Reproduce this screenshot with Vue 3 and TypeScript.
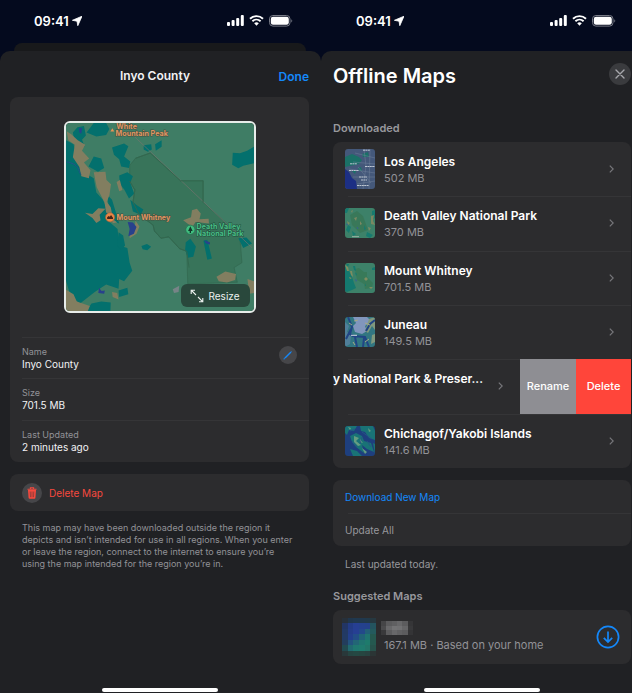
<script setup lang="ts">
type Thumb = 'city' | 'valley' | 'terrain' | 'fjord' | 'islands'

interface OfflineMap {
  name: string
  size?: string
  thumb?: Thumb
  swiped?: boolean
}

interface Detail {
  label: string
  value: string
  editable?: boolean
}

const details: Detail[] = [
  { label: 'Name', value: 'Inyo County', editable: true },
  { label: 'Size', value: '701.5 MB' },
  { label: 'Last Updated', value: '2 minutes ago' },
]

const maps: OfflineMap[] = [
  { name: 'Los Angeles', size: '502 MB', thumb: 'city' },
  { name: 'Death Valley National Park', size: '370 MB', thumb: 'valley' },
  { name: 'Mount Whitney', size: '701.5 MB', thumb: 'terrain' },
  { name: 'Juneau', size: '149.5 MB', thumb: 'fjord' },
  { name: 'y National Park & Preser...', swiped: true },
  { name: 'Chichagof/Yakobi Islands', size: '141.6 MB', thumb: 'islands' },
]

// Obscured preview of the suggested map, one colour per tile
const tiles: string[][] = [
  ['#27303a', '#20364c', '#20384e', '#20384e', '#21394a', '#263840'],
  ['#223564', '#233b85', '#263f92', '#24418e', '#24418c', '#24545f'],
  ['#223964', '#243c88', '#263f93', '#23498a', '#226078', '#245a5d'],
  ['#223a64', '#233f8c', '#234d87', '#216377', '#1f7470', '#25584f'],
  ['#233d5c', '#23537e', '#226675', '#20746f', '#1e7b6c', '#25584f'],
  ['#224a50', '#216a70', '#1f7870', '#1f7b6e', '#237568', '#27524b'],
  ['#29383a', '#264542', '#254843', '#264641', '#284240', '#2b3535'],
]

const nameTiles: string[][] = [
  ['#454547', '#5b5b5d', '#606062', '#68686a', '#5c5c5e', '#353537'],
  ['#4b4b4d', '#68686a', '#737375', '#717173', '#666668', '#38383a'],
  ['#39393b', '#5c5c5e', '#68686a', '#616163', '#5c5c5e', '#343436'],
]
</script>

<template>
  <main class="screens">
    <svg class="defs" aria-hidden="true">
      <symbol id="terrain" viewBox="27 27 576 576">
        <rect x="27" y="27" width="576" height="576" fill="#3f7d65" />
        <path fill="#38745a" d="M222 157L240 135 285 119 378 204H447V270L520 335 560 378 566 455 542 470 552 515 400 520 397 420 375 412 342 376 318 380 298 358 294 340 252 308 232 270 238 232 222 205Z" stroke="#33674f" stroke-width="2" />
        <path fill="#03706d" d="M27 80L50 92 58 125 75 140 85 180 112 196 120 240 140 262 152 290 160 330 185 352 190 402 215 410 222 455 230 480 205 512 190 505 188 535 150 522 115 545 70 580 42 560 27 510Z" />
        <path fill="#03706d" d="M48 56L62 40 82 36 88 65 76 78 84 98 72 110 52 78ZM112 27H150L160 45 150 64 120 68 90 56ZM168 102L205 90 218 98 205 130 224 145 220 165 196 160 190 138 174 124ZM112 130L135 136 144 165 125 176 96 160ZM190 188L215 178 232 190 224 210 236 244 220 258 205 230 192 215ZM224 262L243 278 264 292 256 308 232 298ZM265 95L288 92 290 108 278 115 265 108ZM300 92L320 80 320 100 302 112ZM538 118L560 120 582 112 603 100V150L570 158 555 166 536 155ZM155 248L168 262 182 308 190 335 170 328 157 290ZM188 362L202 372 208 402 196 415 184 402ZM258 404L275 398 288 406 276 417 262 414ZM394 392L408 382 425 405 417 437 400 440 392 415ZM448 388L460 385 474 442 460 446ZM555 380L580 378 597 396 570 410ZM105 580L135 574 164 577 163 603H90ZM188 540L215 532 218 552 190 560Z" />
        <path fill="#827e60" d="M29 52L44 62 63 80 86 94 76 112 98 136 82 148 102 172 97 196 74 190 68 162 48 132 54 94 34 80ZM112 178L148 176 151 202 165 215 160 248 152 268 164 285 168 304 150 302 145 270 121 224ZM85 302L108 306 126 288 148 290 130 308 133 325 120 333 108 318ZM182 208L192 202 200 232 190 236ZM166 318L184 332 170 334ZM240 326L252 344 243 366 222 380 222 372 237 350ZM386 325L410 316 413 294 428 290 440 304 436 322 464 320 465 335 424 330 415 344 400 336ZM488 498L515 482 548 490 545 508 520 516 495 512ZM27 538L50 552 60 574 100 588 94 603H27ZM168 545L184 548 188 568 170 560ZM583 505L603 512V548L588 550Z" />
        <path fill="#28418c" d="M216 330L232 332 243 346 235 366 218 374 222 352ZM67 42L76 42 74 60 68 56ZM128 532L136 542 146 540 144 550 126 548ZM450 386L468 392 468 399 456 396Z" />
        <path d="M29 146C45 149 58 155 63 164S68 180 73 185" fill="none" stroke="#27518a" stroke-width="3" />
        <path d="M354 536L374 526 372 545 358 548Z" fill="#778487" />
        <path d="M200 34L597 409" fill="none" stroke="#77736f" stroke-width="2" />
        <path d="M240 135L285 119 378 204H447V270M222 205L238 232 232 270 252 308 294 340 298 358 318 380 342 376 375 412 397 420 404 470" fill="none" stroke="#33674f" stroke-width="3" />
      </symbol>
      <symbol id="locate" viewBox="0 0 10 10"><path d="M10 .2L5.8 9.7 5 5.2.4 4.3Z" fill="#fff" stroke="#fff" stroke-width=".8" stroke-linejoin="round" /></symbol>
      <symbol id="signal" viewBox="0 0 17 11">
        <rect x="0" y="7" width="3" height="4" rx="1" fill="#fff" /><rect x="4.6" y="5" width="3" height="6" rx="1" fill="#fff" />
        <rect x="9.2" y="3" width="3" height="8" rx="1" fill="#fff" /><rect x="13.8" y="0" width="3" height="11" rx="1" fill="#fff" />
      </symbol>
      <symbol id="wifi" viewBox="0 0 15 11">
        <path d="M1 3.8C4.7.2 10.3.2 14 3.8M3.4 6.3C5.8 4 9.2 4 11.6 6.3" fill="none" stroke="#fff" stroke-width="1.9" />
        <path d="M5.2 8.2Q7.5 6.2 9.8 8.2L7.5 10.7Z" fill="#fff" />
      </symbol>
      <symbol id="battery" viewBox="0 0 24 12">
        <rect x=".5" y=".5" width="20.5" height="10.6" rx="3.4" fill="none" stroke="#777a85" />
        <rect x="1.8" y="1.8" width="18" height="8" rx="2.2" fill="#fff" />
        <path d="M22.3 4.2C23.6 4.7 23.6 6.9 22.3 7.4Z" fill="#777a85" />
      </symbol>
    </svg>

    <section class="phone detail" aria-labelledby="detail-title">
      <div class="status">
        <span class="time">09:41</span>
        <svg class="locate"><use href="#locate" /></svg>
        <svg class="signal"><use href="#signal" /></svg>
        <svg class="wifi"><use href="#wifi" /></svg>
        <svg class="battery"><use href="#battery" /></svg>
      </div>
      <div class="behind"></div>
      <div class="sheet">
        <header class="bar">
          <h1 id="detail-title">Inyo County</h1>
          <button type="button" class="done">Done</button>
        </header>
        <div class="card">
          <div class="preview">
            <div class="map">
              <svg class="fill" viewBox="27 27 576 576">
                <use href="#terrain" x="27" y="27" width="576" height="576" />
                <path d="M169 43L175 53H163Z" fill="#e99255" />
                <g class="place warm">
                  <text><tspan x="181" y="44">White</tspan><tspan x="179" y="67">Mountain Peak</tspan></text>
                  <text x="182" y="323">Mount Whitney</text>
                </g>
                <g class="place park">
                  <text><tspan x="427" y="351">Death Valley</tspan><tspan x="427" y="374">National Park</tspan></text>
                </g>
                <circle cx="162" cy="316" r="14" fill="#e98645" stroke="#9c603d" stroke-width="2" />
                <path d="M153 321V316L158 312 161 314 165 309 171 317V321Z" fill="#43261b" />
                <circle cx="408" cy="354" r="14" fill="#41bd7f" stroke="#23704e" stroke-width="2" />
                <path d="M408 343L415 358H410V364H406V358H401Z" fill="#12392a" />
              </svg>
              <button type="button" class="resize">
                <svg viewBox="0 0 14 14"><path d="M1.2 5V1.2H5M1.2 1.2L6 6M8 8L12.8 12.8M12.8 9V12.8H9" /></svg>
                Resize
              </button>
            </div>
          </div>
          <dl class="details">
            <div v-for="d in details" :key="d.label" class="entry">
              <div>
                <dt>{{ d.label }}</dt>
                <dd>{{ d.value }}</dd>
              </div>
              <button v-if="d.editable" type="button" class="edit" aria-label="Edit name">
                <svg viewBox="0 0 18 18"><path d="M6 12L12 6" stroke="#1488fa" stroke-width="1.5" /><path d="M4.8 13.2L6 12.6 5.4 12ZM12.2 5.2L12.8 5.8" stroke="#1488fa" stroke-width=".8" /></svg>
              </button>
            </div>
          </dl>
        </div>
        <button type="button" class="card remove">
          <span class="bin">
            <svg viewBox="0 0 10 12">
              <path d="M.5 2.3H9.5M3.4 2.2V.8H6.6V2.2" fill="none" stroke="#f6493e" stroke-width="1.1" />
              <path d="M1 3H9L8.4 11Q8.3 11.8 7.5 11.8H2.5Q1.7 11.8 1.6 11Z" fill="#f6493e" />
              <path d="M3.2 4.5L3.5 10.2M5 4.5V10.2M6.8 4.5L6.5 10.2" stroke="#6f3a38" stroke-width=".7" />
            </svg>
          </span>
          Delete Map
        </button>
        <p class="note">This map may have been downloaded outside the region it depicts and isn’t intended for use in all regions. When you enter or leave the region, connect to the internet to ensure you’re using the map intended for the region you’re in.</p>
        <div class="home"></div>
      </div>
    </section>

    <section class="phone library" aria-labelledby="library-title">
      <div class="status">
        <span class="time">09:41</span>
        <svg class="locate"><use href="#locate" /></svg>
        <svg class="signal"><use href="#signal" /></svg>
        <svg class="wifi"><use href="#wifi" /></svg>
        <svg class="battery"><use href="#battery" /></svg>
      </div>
      <div class="sheet">
        <header class="heading">
          <h1 id="library-title">Offline Maps</h1>
          <button type="button" class="close" aria-label="Close">
            <svg viewBox="0 0 10 10"><path d="M1 1L9 9M9 1L1 9" /></svg>
          </button>
        </header>
        <h2>Downloaded</h2>
        <ul class="card list">
          <li v-for="m in maps" :key="m.name" :class="{ swiped: m.swiped }">
            <a href="#" class="row">
              <svg v-if="m.thumb === 'city'" class="thumb tall" viewBox="0 0 30 40">
                <rect width="30" height="40" fill="#44587a" />
                <path d="M0 8L7 5 14 8 17 11 14 15 0 18ZM17 5L23 3 24 8 18 8ZM13 19L16 18 17 22 14 22ZM7 22L11 22 10 25Z" fill="#1b7067" />
                <path d="M0 20L4 23 7 29 11 32 12 40H0Z" fill="#1c2f84" />
                <path d="M8 13L30 15M4 20L30 24M8 28L30 28M12 35L30 32M19 0L21 17 18 40M25 0L24 40M10 4L30 9M13 18L26 34" stroke="#71819b" stroke-width=".5" fill="none" />
                <path d="M18 1.2H25M5 14.8H12M20 17.5H30M4 21.5H14M14 28H22M16 31H22M12 36.5H24" stroke="#bdc6d2" stroke-width="1" stroke-dasharray="2 .4" />
              </svg>
              <svg v-else-if="m.thumb === 'valley'" class="thumb" viewBox="0 0 30 30">
                <rect width="30" height="30" fill="#3d8169" />
                <path d="M5 7L12 3 18 8 23 22 15 25 7 17Z" fill="#397859" />
                <path d="M0 0H4L2 5H0ZM27 3L30 2V10L27 12ZM3 17L6 19 4 25 1 22ZM22 24L28 27 25 30 21 28ZM7 23L11 26 8 28ZM19 17L21 21 19 22Z" fill="#177a6f" />
                <path d="M26 8L29 7 28 13 30 17 26 16ZM9 10L12 9 11 13ZM15 13L17 16 15 17ZM6 3L8 2 7 5ZM2 13L5 15 3 17ZM23 19L26 20 24 23Z" fill="#7b8862" />
                <path d="M1 16L3 17M12 19L13 21" stroke="#365f96" />
                <path d="M7 28.7H14" stroke="#b6c4b7" stroke-width=".8" />
              </svg>
              <svg v-else-if="m.thumb === 'terrain'" class="thumb" viewBox="0 0 30 30">
                <rect width="30" height="30" fill="#3d8169" />
                <path d="M10 6L14 5 19 9H22V14L28 20 27 25 20 26 19 21 12 17Z" fill="#387a59" />
                <path d="M0 3L3 6 5 10 7 14 9 20 11 25 7 27 2 29 0 28ZM8 3L10 3 11 8 9 7ZM10 9L12 11 11 13ZM27 5L30 4V7H27ZM20 20L21 23 20 23ZM1 1L4 1 3 4Z" fill="#14796f" />
                <path d="M0 2L3 4 4 8 2 8ZM5 8L7 8 8 14 6 12ZM4 14L7 15 5 16ZM19 16L21 14 23 16 21 18ZM24 24L28 24 26 26Z" fill="#7f8d60" />
                <path d="M10 16L12 17 11 19Z" fill="#365f96" />
              </svg>
              <svg v-else-if="m.thumb === 'fjord'" class="thumb" viewBox="0 0 30 30">
                <rect width="30" height="30" fill="#327681" />
                <path d="M8 0H22L26 4 20 9 22 14 17 17 10 15 8 9 11 6Z" fill="#8196bd" />
                <path d="M24 2L30 0V13L27 9 23 16 20 14ZM27 18L30 17V25L26 27Z" fill="#80987d" />
                <path d="M0 5L4 9 2 15 6 18 5 27 0 30Z" fill="#507f9a" />
                <path d="M3 0L7 10 5 17 10 20 12 30M6 12L1 22M7 19L20 20 24 30M21 14L25 7 30 3M19 21L18 30" stroke="#214585" stroke-width="2" fill="none" />
                <path d="M4 6L7 8M9 4L13 3M20 6L25 8M20 25L24 22M8 25L10 28" stroke="#a6aa84" stroke-width="1" />
                <path d="M6 18.3H12" stroke="#d0d8df" />
              </svg>
              <svg v-else-if="m.thumb === 'islands'" class="thumb" viewBox="0 0 30 30">
                <rect width="30" height="30" fill="#1e3f7e" />
                <path d="M0 0H12L9 5 4 4 2 9 0 7ZM15 0H28L30 5V14L24 12 20 6 16 5ZM5 10L11 7 17 10 19 15 26 17 29 26 22 23 17 19 19 27 11 21 7 16ZM5 23L12 25 17 30H8ZM28 17L30 18V28Z" fill="#197376" />
                <path d="M9 10L14 12 11 15 16 19 13 20 9 16ZM15 13L18 17 15 16ZM17 22L22 26 20 28ZM23 2L26 5 24 6ZM3 1L6 2 5 4Z" fill="#659d82" />
                <path d="M7 15L12 21M17 11L15 18M22 15L26 21M5 5L10 3M17 6L27 13" stroke="#275586" stroke-width=".9" fill="none" />
              </svg>
              <span class="label">
                <span class="name">{{ m.name }}</span>
                <span class="size">{{ m.size }}</span>
              </span>
              <svg class="chevron" viewBox="0 0 5 8"><path d="M.8 .6L4.2 4 .8 7.4" /></svg>
            </a>
            <template v-if="m.swiped">
              <button type="button" class="action rename">Rename</button>
              <button type="button" class="action delete">Delete</button>
            </template>
          </li>
        </ul>
        <div class="card commands">
          <button type="button" class="download">Download New Map</button>
          <button type="button">Update All</button>
        </div>
        <p class="updated">Last updated today.</p>
        <h2>Suggested Maps</h2>
        <div class="card suggested">
          <svg class="mosaic" viewBox="0 0 6 7" preserveAspectRatio="none" shape-rendering="crispEdges">
            <template v-for="(line, y) in tiles" :key="y">
              <rect v-for="(c, x) in line" :key="x" :x="x" :y="y" width="1" height="1" :fill="c" />
            </template>
          </svg>
          <div class="about">
            <svg class="hidden-name" viewBox="0 0 6 3" preserveAspectRatio="none" shape-rendering="crispEdges">
              <template v-for="(line, y) in nameTiles" :key="y">
                <rect v-for="(c, x) in line" :key="x" :x="x" :y="y" width="1" height="1" :fill="c" />
              </template>
            </svg>
            <span class="size">167.1 MB · Based on your home</span>
          </div>
          <button type="button" class="get" aria-label="Download suggested map">
            <svg viewBox="0 0 24 24"><circle cx="12" cy="12" r="10.6" /><path d="M12 6.5V17M7.8 12.9L12 17.1 16.2 12.9" /></svg>
          </button>
        </div>
        <div class="home"></div>
      </div>
    </section>
  </main>
</template>

<style>
body {
  margin: 0;
  background: #040a1e;
}
</style>

<style scoped>
.screens {
  display: grid;
  grid-template-columns: 321fr 311fr;
  min-height: 100vh;
  background: #040a1e;
  color: #f2f2f4;
  font-family: Inter, "Liberation Sans", sans-serif;
  font-size: 10px;
}
.screens * { box-sizing: border-box; }
.defs {
  position: absolute;
  width: 0;
  height: 0;
}
h1, h2, p, dl, dd, ul {
  margin: 0;
  padding: 0;
}
button {
  padding: 0;
  border: 0;
  background: none;
  color: inherit;
  font: inherit;
}
svg { display: block; flex: none; }
.phone {
  display: flex;
  flex-direction: column;
  min-width: 0;
}
.status {
  display: flex;
  align-items: center;
  height: 43px;
  padding: 0 28px 2px 34px;
  color: #fff;
}
.library .status {
  height: 51px;
  padding: 0 16px 10px 35px;
}
.time {
  font-size: 13px;
  font-weight: 600;
  line-height: 18px;
}
.locate { width: 10px; height: 10px; margin: 0 auto 0 3px; }
.signal { width: 17px; height: 11px; }
.wifi { width: 15px; height: 11px; margin: 0 5px; }
.battery { width: 24px; height: 12px; }
.behind {
  height: 8px;
  margin: 0 15px 0 14px;
  border-radius: 8px 8px 0 0;
  background: #18191b;
}
.sheet {
  display: flex;
  flex: 1;
  flex-direction: column;
  border-radius: 10px 10px 0 0;
  background: #202124;
}
.detail .sheet { padding: 0 12px 0 10px; }
.library .sheet {
  padding: 0 1px 0 12px;
  border-radius: 10px 0 0 0;
}
.bar {
  display: grid;
  grid-template-columns: 1fr auto 1fr;
  align-items: center;
  height: 46px;
  padding-top: 4px;
}
.bar h1 {
  grid-column: 2;
  padding-right: 9px;
  font-size: 12px;
  font-weight: 600;
  line-height: 16px;
}
.done {
  justify-self: end;
  color: #1488fa;
  font-size: 12px;
  font-weight: 600;
}
.card {
  border-radius: 8px;
  background: #2c2c2e;
}
.preview {
  display: flex;
  justify-content: center;
  padding: 24px 0;
}
.map {
  position: relative;
  width: 192px;
  height: 192px;
  border: 2px solid #e8edea;
  border-radius: 6px;
  overflow: hidden;
}
.fill { width: 100%; height: 100%; }
.place {
  font-size: 22px;
  font-weight: 700;
  paint-order: stroke;
  stroke-width: 3px;
}
.warm { fill: #df9663; stroke: #46503f; }
.park { fill: #48bd86; stroke: #1f4d3b; }
.resize {
  position: absolute;
  right: 4px;
  bottom: 4px;
  display: flex;
  align-items: center;
  justify-content: center;
  gap: 4px;
  width: 69px;
  height: 23px;
  border-radius: 6px;
  background: #29483c;
  color: #edf1ef;
}
.resize svg { width: 14px; height: 14px; }
.resize path { fill: none; stroke: #edf1ef; stroke-width: 1.1; }
.details { padding-left: 12px; }
.entry {
  display: flex;
  align-items: flex-start;
  justify-content: space-between;
  min-height: 42px;
  padding: 8px 12px 8px 0;
  border-top: 1px solid #353537;
}
.entry:first-child { min-height: 41px; }
dt {
  color: #929297;
  font-size: 9px;
  line-height: 12px;
}
dd { line-height: 12px; }
.edit, .bin {
  display: grid;
  place-items: center;
  width: 18px;
  height: 18px;
  border-radius: 50%;
  background: #464649;
}
.edit svg { width: 18px; height: 18px; }
.remove {
  display: flex;
  align-items: center;
  gap: 7px;
  height: 37px;
  margin-top: 12px;
  padding: 0 12px;
  color: #f6493e;
}
.bin { width: 20px; height: 20px; }
.bin svg { width: 10px; height: 12px; }
.note {
  padding: 11px 12px;
  color: #929297;
  font-size: 9px;
  line-height: 12px;
}
.home {
  width: 116px;
  height: 4px;
  margin: auto auto 1px;
  border-radius: 2px;
  background: #fff;
}
.library .home { margin-left: 91px; }
.heading {
  display: flex;
  align-items: flex-start;
  justify-content: space-between;
  height: 68px;
  padding-top: 12px;
}
.heading h1 {
  color: #fff;
  font-size: 20px;
  font-weight: 600;
  line-height: 26px;
}
.close {
  display: grid;
  place-items: center;
  width: 22px;
  height: 22px;
  border-radius: 50%;
  background: #3a3b3e;
}
.close svg { width: 10px; height: 10px; }
.close path { fill: none; stroke: #a6a6ab; stroke-width: 1.4; stroke-linecap: round; }
h2 {
  color: #98989d;
  font-size: 11px;
  font-weight: 600;
  line-height: 18px;
}
.list {
  display: grid;
  grid-auto-rows: 1fr;
  min-height: 326px;
  margin-top: 5px;
  overflow: hidden;
  list-style: none;
}
.list li {
  display: flex;
  min-width: 0;
  background: linear-gradient(#353537, #353537) 15px 0 / 100% 1px no-repeat;
}
.list li:first-child { background: none; }
.row {
  display: flex;
  flex: 1;
  align-items: center;
  gap: 9px;
  min-width: 0;
  padding: 0 17px 0 12px;
  color: inherit;
  text-decoration: none;
}
.thumb {
  width: 30px;
  height: 30px;
  border-radius: 3px;
}
.tall { height: 40px; }
.label {
  display: flex;
  flex: 1;
  flex-direction: column;
  min-width: 0;
  padding-top: 2px;
}
.name {
  color: #fff;
  font-size: 12px;
  font-weight: 600;
  line-height: 16px;
  white-space: nowrap;
}
.size {
  min-height: 16px;
  color: #929297;
  font-size: 11px;
  line-height: 16px;
}
.chevron { width: 5px; height: 8px; }
.chevron path { fill: none; stroke: #77777b; stroke-width: 1.2; }
.swiped .row { padding-left: 0; }
.action {
  width: 56px;
  color: #fff;
  font-size: 11px;
  font-weight: 500;
}
.rename { background: #8e8e93; }
.delete { width: 55px; background: #ff453a; }
.commands {
  display: flex;
  flex-direction: column;
  margin-top: 12px;
}
.commands button {
  height: 33px;
  padding-left: 12px;
  color: #98989d;
  text-align: left;
}
.commands .download { color: #1488fa; }
.commands button + button { background: linear-gradient(#353537, #353537) 15px 0 / 100% 1px no-repeat; }
.updated {
  padding: 9px 12px 14px;
  color: #98989d;
  line-height: 18px;
}
.suggested {
  display: flex;
  align-items: center;
  height: 54px;
  margin-top: 5px;
  padding: 0 11px 0 9px;
}
.mosaic { width: 34px; height: 38px; }
.about {
  display: flex;
  flex: 1;
  flex-direction: column;
  gap: 2px;
  padding-left: 8px;
}
.hidden-name { width: 32px; height: 14px; margin-left: -3px; }
.get svg { width: 24px; height: 24px; }
.get circle, .get path { fill: none; stroke: #1488fa; stroke-width: 1.7; }
</style>
